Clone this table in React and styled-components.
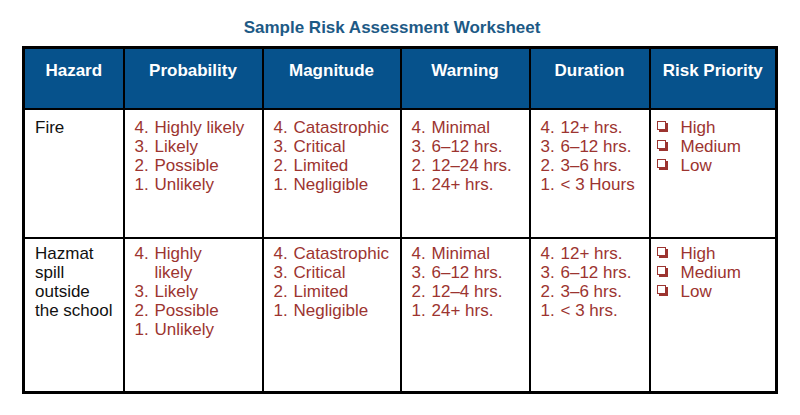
import React from "react";
import styled, { createGlobalStyle } from "styled-components";

const GlobalStyle = createGlobalStyle`
  body {
    margin: 0;
    background: #ffffff;
    font-family: "Liberation Sans", Arial, sans-serif;
  }
`;

const Page = styled.div`
  width: 800px;
  height: 415px;
  padding-top: 18px;
  box-sizing: border-box;
`;

const Title = styled.h1`
  margin: 0 16px 8px 0;
  font-size: 17px;
  line-height: 20px;
  font-weight: bold;
  text-align: center;
  color: #1d5a86;
`;

const Sheet = styled.table`
  margin-left: 22px;
  width: 756px;
  table-layout: fixed;
  border-collapse: collapse;
  border: 3px solid #000;
`;

const HeadCell = styled.th`
  height: 47px;
  padding: 12px 4px 0;
  vertical-align: top;
  background: #06528c;
  color: #fff;
  font-size: 17px;
  line-height: 19px;
  font-weight: bold;
  text-align: center;
  border: 2px solid #000;
`;

const Cell = styled.td`
  height: ${(p) => p.$h}px;
  padding: ${(p) => p.$pt}px 4px 0 ${(p) => (p.$narrow ? 6 : 10)}px;
  vertical-align: top;
  border: 2px solid #000;
  font-size: 17px;
  line-height: 19px;
  color: ${(p) => (p.$plain ? "#111" : "#9c3430")};
`;

const Item = styled.div`
  display: flex;
  white-space: nowrap;
`;

const Num = styled.span`
  flex: none;
  width: 20px;
`;

// shadowed check box, like the Wingdings "q" glyph
const Check = styled.span`
  flex: none;
  width: 7px;
  height: 7px;
  margin: 3px 15px 0 0;
  border: 1px solid #9c3430;
  box-shadow: 2px 2px 0 #9c3430;
`;

const cols = [100, 139, 138, 129, 120, 127];
const heads = ["Hazard", "Probability", "Magnitude", "Warning", "Duration", "Risk Priority"];

const rows = [
  {
    h: 119,
    pt: 8,
    hazard: ["Fire"],
    lists: [
      [["4.", "Highly likely"], ["3.", "Likely"], ["2.", "Possible"], ["1.", "Unlikely"]],
      [["4.", "Catastrophic"], ["3.", "Critical"], ["2.", "Limited"], ["1.", "Negligible"]],
      [["4.", "Minimal"], ["3.", "6–12 hrs."], ["2.", "12–24 hrs."], ["1.", "24+ hrs."]],
      [["4.", "12+ hrs."], ["3.", "6–12 hrs."], ["2.", "3–6 hrs."], ["1.", "< 3 Hours"]],
    ],
  },
  {
    h: 147,
    pt: 5,
    hazard: ["Hazmat", "spill", "outside", "the school"],
    lists: [
      [["4.", "Highly", "likely"], ["3.", "Likely"], ["2.", "Possible"], ["1.", "Unlikely"]],
      [["4.", "Catastrophic"], ["3.", "Critical"], ["2.", "Limited"], ["1.", "Negligible"]],
      [["4.", "Minimal"], ["3.", "6–12 hrs."], ["2.", "12–4 hrs."], ["1.", "24+ hrs."]],
      [["4.", "12+ hrs."], ["3.", "6–12 hrs."], ["2.", "3–6 hrs."], ["1.", "< 3 hrs."]],
    ],
  },
];

const priorities = ["High", "Medium", "Low"];

export default function App() {
  return (
    <Page>
      <GlobalStyle />
      <Title>Sample Risk Assessment Worksheet</Title>
      <Sheet>
        <colgroup>
          {cols.map((w, i) => (
            <col key={i} style={{ width: w }} />
          ))}
        </colgroup>
        <thead>
          <tr>
            {heads.map((h) => (
              <HeadCell key={h}>{h}</HeadCell>
            ))}
          </tr>
        </thead>
        <tbody>
          {rows.map((r, ri) => (
            <tr key={ri}>
              <Cell $h={r.h} $pt={r.pt} $plain>
                {r.hazard.map((t) => (
                  <div key={t}>{t}</div>
                ))}
              </Cell>
              {r.lists.map((list, li) => (
                <Cell key={li} $h={r.h} $pt={r.pt}>
                  {list.map(([n, ...text]) => (
                    <Item key={n}>
                      <Num>{n}</Num>
                      <span>
                        {text.map((t, ti) => (
                          <React.Fragment key={ti}>
                            {ti > 0 && <br />}
                            {t}
                          </React.Fragment>
                        ))}
                      </span>
                    </Item>
                  ))}
                </Cell>
              ))}
              <Cell $h={r.h} $pt={r.pt} $narrow>
                {priorities.map((p) => (
                  <Item key={p}>
                    <Check />
                    <span>{p}</span>
                  </Item>
                ))}
              </Cell>
            </tr>
          ))}
        </tbody>
      </Sheet>
    </Page>
  );
}
